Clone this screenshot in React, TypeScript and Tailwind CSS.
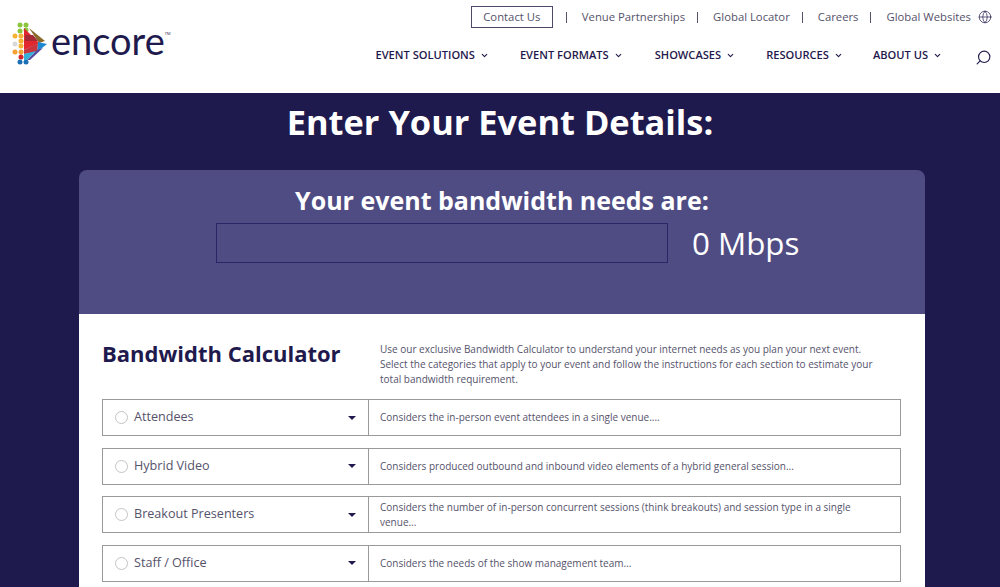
import { ChevronDown, Globe, Search } from 'lucide-react';

const topLinks = ['Venue Partnerships', 'Global Locator', 'Careers'];

const navItems = [
  { label: 'EVENT SOLUTIONS', className: 'mr-[31px]' },
  { label: 'EVENT FORMATS', className: 'mr-[32px]' },
  { label: 'SHOWCASES', className: 'mr-[31px]' },
  { label: 'RESOURCES', className: 'mr-[30px]' },
  { label: 'ABOUT US', className: 'mr-[33px]' },
];

const rows = [
  { title: 'Attendees', text: 'Considers the in-person event attendees in a single venue....' },
  { title: 'Hybrid Video', text: 'Considers produced outbound and inbound video elements of a hybrid general session...' },
  {
    title: 'Breakout Presenters',
    text: 'Considers the number of in-person concurrent sessions (think breakouts) and session type in a single venue...',
  },
  { title: 'Staff / Office', text: 'Considers the needs of the show management team...' },
];

function Logo() {
  const dots = [
    [20, 25, '#8cc63f'], [26, 25, '#8cc63f'], [20, 31, '#8cc63f'], [26, 30, '#8cc63f'],
    [15, 36, '#f5b335'], [21, 36, '#f5b335'], [21, 41, '#f5b335'], [15, 44, '#d9d9d9'], [21, 46, '#f5b335'],
    [15, 52, '#f5a033'], [21, 52, '#f5a033'], [21, 57, '#d8232a'], [20, 62, '#1b6fb5'], [26, 62, '#1b6fb5'],
  ] as const;
  return (
    <svg width="36" height="46" viewBox="12 21 36 46" className="shrink-0">
      {dots.map(([x, y, c]) => (
        <circle key={`${x}-${y}`} cx={x} cy={y} r="2.5" fill={c} />
      ))}
      <polygon points="24,28 39,43 24,50" fill="#e0282e" />
      <polygon points="29,28 45,41 39,43" fill="#8a6a2a" />
      <polygon points="25,35 33,35 38,41 25,41" fill="#a52a35" />
      <polygon points="38,42 47,44 37,52" fill="#1e88d0" />
      <polygon points="24,50 38,43 37,52 24,54" fill="#c8353f" />
      <polygon points="27,60 37,50 43,48 30,60" fill="#5c4a9c" />
      <polygon points="24,54 36,51 27,60 24,60" fill="#35b0d8" />
    </svg>
  );
}

function CalcRow({ title, text }: { title: string; text: string }) {
  return (
    <div className="flex h-[37px] border border-[#9a9a9a] text-[#55526b]">
      <div className="flex w-[266px] shrink-0 items-center border-r border-[#9a9a9a] pl-[12px] pr-[12px]">
        <span className="h-[13px] w-[13px] rounded-full border border-[#c4c4c4]" />
        <span className="ml-[6px] flex-1 text-[12.6px]">{title}</span>
        <span className="h-0 w-0 border-x-[4px] border-t-[4px] border-x-transparent border-t-[#1f1a4d]" />
      </div>
      <p className="flex flex-1 items-center pl-[11px] pr-[30px] text-[10px] leading-[15px]">{text}</p>
    </div>
  );
}

export default function App() {
  return (
    <div className="h-[587px] overflow-hidden bg-[#1f1a4d] font-['Open_Sans',sans-serif]">
      <header className="flex h-[93px] bg-white">
        <div className="flex items-start pl-[12px] pt-[21px]">
          <Logo />
          <span className="ml-[3px] mt-[-2px] font-['Lato',sans-serif] text-[38px] leading-[42px] text-[#1f1a4d]">encore</span>
          <span className="mt-[11px] text-[4px] leading-none text-[#1f1a4d]">TM</span>
        </div>
        <div className="ml-auto flex flex-col items-end">
          <div className="mt-[6px] flex h-[22px] items-center pr-[8px] text-[11.3px] text-[#55526b]">
            <a className="mr-px flex h-[22px] w-[82px] items-center justify-center border border-[#4c4a66]">Contact Us</a>
            {topLinks.map((link) => (
              <span key={link} className="flex items-center">
                <span className="mx-[12px] h-[11px] w-px bg-[#55526b]" />
                <span className="ml-[3px]">{link}</span>
              </span>
            ))}
            <span className="mx-[12px] h-[11px] w-px bg-[#55526b]" />
            <span className="ml-[3px]">Global Websites</span>
            <Globe size={14} strokeWidth={1.2} className="ml-[7px] text-[#1f1a4d]" />
          </div>
          <nav className="mt-[20px] flex h-[14px] items-center pr-[8px] text-[11.1px] font-semibold text-[#1f1a4d]">
            {navItems.map((item) => (
              <span key={item.label} className={`flex items-center ${item.className}`}>
                {item.label}
                <ChevronDown size={9} strokeWidth={3} className="ml-[5px]" />
              </span>
            ))}
            <Search size={17} strokeWidth={1.6} className="mt-[4px] -scale-x-100" />
          </nav>
        </div>
      </header>

      <main>
        <h1 className="mt-[8px] text-center text-[34.4px] font-bold leading-[42px] text-white">Enter Your Event Details:</h1>
        <section className="ml-[79px] mt-[27px] w-[846px] overflow-hidden rounded-t-[8px]">
          <div className="h-[144px] bg-[#4f4c84] pt-[15px]">
            <h2 className="text-center text-[25px] font-bold leading-[30px] text-white">Your event bandwidth needs are:</h2>
            <div className="mt-[8px] flex items-center">
              <div className="ml-[137px] h-[40px] w-[452px] border border-[#2a2566]" />
              <div className="ml-[24px] text-[31.3px] leading-[40px] text-white">0 Mbps</div>
            </div>
          </div>
          <div className="h-[280px] bg-white pl-[23px] pr-[24px]">
            <div className="flex h-[85px]">
              <h3 className="w-[278px] shrink-0 pt-[23px] text-[22px] font-bold leading-[32px] text-[#1f1a4d]">Bandwidth Calculator</h3>
              <p className="pt-[28px] pr-[20px] text-[10px] leading-[15px] text-[#55526b]">
                Use our exclusive Bandwidth Calculator to understand your internet needs as you plan your next event. Select the categories that apply to your event and follow the instructions for each section to estimate your total bandwidth requirement.
              </p>
            </div>
            <div className="flex flex-col gap-[11.5px]">
              {rows.map((row) => (
                <CalcRow key={row.title} title={row.title} text={row.text} />
              ))}
            </div>
          </div>
        </section>
      </main>
    </div>
  );
}
